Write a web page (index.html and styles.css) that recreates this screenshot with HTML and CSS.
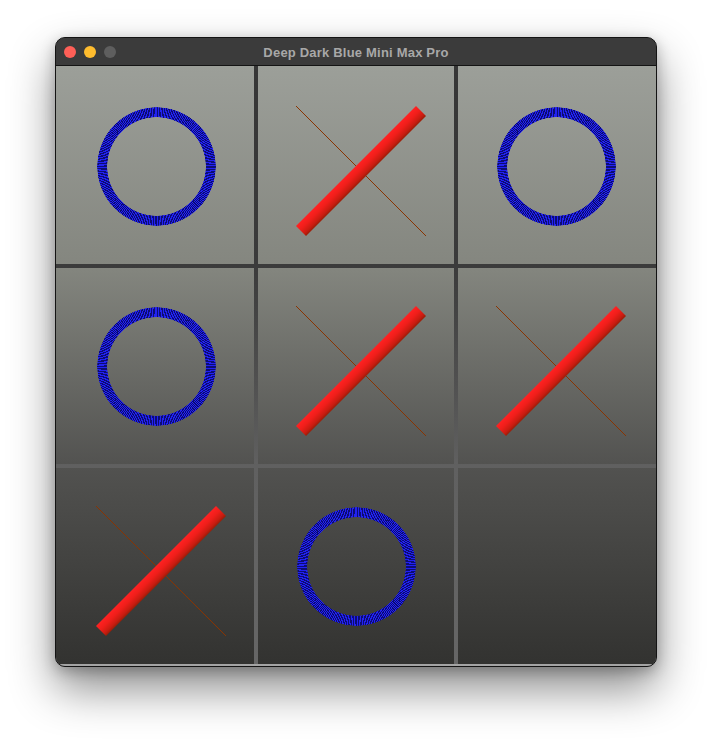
FILE: index.html
```html
<!DOCTYPE html>
<html>
<head>
<meta charset="utf-8">
<title>Deep Dark Blue Mini Max Pro</title>
<link rel="stylesheet" href="styles.css">
</head>
<body>
<div class="window">
  <div class="titlebar">
    <div class="lights">
      <span class="light red"></span>
      <span class="light yellow"></span>
      <span class="light gray"></span>
    </div>
    <div class="title">Deep Dark Blue Mini Max Pro</div>
    <div></div>
  </div>
  <div class="board">
    <div class="cell"><div class="canvas"><div class="ring"></div></div></div>
    <div class="cell"><div class="canvas"><svg class="x" width="200" height="200" viewBox="0 0 200 200"><line x1="40.5" y1="40.5" x2="170.5" y2="170.5" stroke="#8a3400" stroke-width="1" shape-rendering="crispEdges"/></svg><div class="bar"></div></div></div>
    <div class="cell"><div class="canvas"><div class="ring"></div></div></div>
    <div class="cell"><div class="canvas"><div class="ring"></div></div></div>
    <div class="cell"><div class="canvas"><svg class="x" width="200" height="200" viewBox="0 0 200 200"><line x1="40.5" y1="40.5" x2="170.5" y2="170.5" stroke="#8a3400" stroke-width="1" shape-rendering="crispEdges"/></svg><div class="bar"></div></div></div>
    <div class="cell"><div class="canvas"><svg class="x" width="200" height="200" viewBox="0 0 200 200"><line x1="40.5" y1="40.5" x2="170.5" y2="170.5" stroke="#8a3400" stroke-width="1" shape-rendering="crispEdges"/></svg><div class="bar"></div></div></div>
    <div class="cell"><div class="canvas"><svg class="x" width="200" height="200" viewBox="0 0 200 200"><line x1="40.5" y1="40.5" x2="170.5" y2="170.5" stroke="#8a3400" stroke-width="1" shape-rendering="crispEdges"/></svg><div class="bar"></div></div></div>
    <div class="cell"><div class="canvas"><div class="ring"></div></div></div>
    <div class="cell"><div class="canvas"></div></div>
  </div>
</div>
</body>
</html>
```
FILE: styles.css
```css
html {
  height: 100%;
  background: #ffffff;
}

body {
  margin: 0;
  min-height: 100%;
  box-sizing: border-box;
  padding: 37px 0 0 55px;
  font-family: "Liberation Sans", Arial, sans-serif;
}

.window {
  width: 600px;
  border: 1px solid #141414;
  border-radius: 10px;
  overflow: hidden;
  background: #3a3a3a;
  box-shadow: 0 22px 45px rgba(0, 0, 0, 0.45), 0 4px 14px rgba(0, 0, 0, 0.25);
}

.titlebar {
  height: 27px;
  border-bottom: 1px solid #141414;
  background: #3b3b3b;
  display: grid;
  grid-template-columns: 1fr auto 1fr;
  align-items: center;
}

.lights {
  display: flex;
  gap: 8px;
  padding-left: 8px;
  padding-top: 1px;
}

.light {
  width: 12px;
  height: 12px;
  border-radius: 50%;
}

.red { background: #fe5f57; }
.yellow { background: #febc2e; }
.gray { background: #5e5e5e; }

.title {
  color: #a8a8a8;
  font-weight: bold;
  font-size: 13px;
  letter-spacing: 0.2px;
  padding-top: 1px;
}

.board {
  display: grid;
  grid-template-columns: 198px 196px 198px;
  grid-template-rows: 198px 196px 196px;
  gap: 4px;
  background: linear-gradient(to bottom, #363636 66px, #3b3b3b 266px, #606060 466px, #666666 666px) fixed;
  border-bottom: 2px solid #a4a4a4;
}

.cell {
  overflow: hidden;
  background: linear-gradient(to bottom, #9c9f99 66px, #84867f 266px, #525250 466px, #323230 666px) fixed;
}

.canvas {
  width: 200px;
  height: 200px;
  display: grid;
  grid-template: 200px / 200px;
}

.canvas > * {
  grid-area: 1 / 1;
}

.cell:nth-child(3n+2) .canvas,
.cell:nth-child(3n) .canvas {
  margin-left: -2px;
}

.cell:nth-child(n+4) .canvas {
  margin-top: -2px;
}

.ring {
  width: 119px;
  height: 119px;
  margin: 41px 0 0 41px;
  border-radius: 50%;
  background: repeating-conic-gradient(#2222f2 0deg 0.8deg, #0c0c74 0.8deg 1.7deg);
  -webkit-mask: radial-gradient(closest-side, transparent calc(100% - 10.5px), #000 calc(100% - 10px), #000 calc(100% - 0.5px), transparent 100%);
  mask: radial-gradient(closest-side, transparent calc(100% - 10.5px), #000 calc(100% - 10px), #000 calc(100% - 0.5px), transparent 100%);
}

.x {
  display: block;
}

.bar {
  width: 200px;
  height: 200px;
  background: linear-gradient(135deg, #ff2222 50%, #f01e1a 52%, #c81c10 54%, #9a1e08 55%);
  clip-path: polygon(40px 160px, 160px 40px, 170px 50px, 50px 170px);
}
```
